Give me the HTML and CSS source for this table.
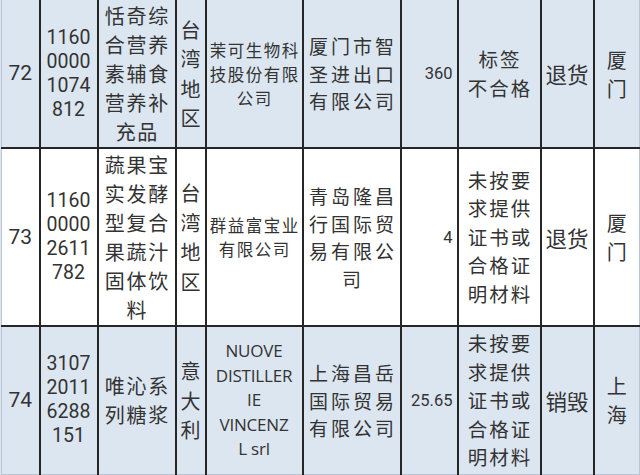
FILE: index.html
```html
<!DOCTYPE html>
<html>
<head>
<meta charset="utf-8">
<link rel="stylesheet" href="styles.css">
</head>
<body>
<div class="sheet">
<table class="grid">
<colgroup>
<col class="w1"><col class="w2"><col class="w3"><col class="w4"><col class="w5"><col class="w6"><col class="w7"><col class="w8"><col class="w9"><col class="w10">
</colgroup>
<tr class="r1 blue">
<td class="no">72</td>
<td class="code">1160<br>0000<br>1074<br>812</td>
<td class="name">恬奇综<br>合营养<br>素辅食<br>营养补<br>充品</td>
<td class="area">台<br>湾<br>地<br>区</td>
<td class="maker">茉可生物科<br>技股份有限<br>公司</td>
<td class="importer">厦门市智<br>圣进出口<br>有限公司</td>
<td class="qty">360</td>
<td class="reason">标签<br>不合格</td>
<td class="act">退货</td>
<td class="port">厦<br>门</td>
</tr>
<tr class="r2 white">
<td class="no">73</td>
<td class="code">1160<br>0000<br>2611<br>782</td>
<td class="name">蔬果宝<br>实发酵<br>型复合<br>果蔬汁<br>固体饮<br>料</td>
<td class="area">台<br>湾<br>地<br>区</td>
<td class="maker">群益富宝业<br>有限公司</td>
<td class="importer">青岛隆昌<br>行国际贸<br>易有限公<br>司</td>
<td class="qty">4</td>
<td class="reason">未按要<br>求提供<br>证书或<br>合格证<br>明材料</td>
<td class="act">退货</td>
<td class="port">厦<br>门</td>
</tr>
<tr class="r3 blue">
<td class="no">74</td>
<td class="code">3107<br>2011<br>6288<br>151</td>
<td class="name">唯沁系<br>列糖浆</td>
<td class="area">意<br>大<br>利</td>
<td class="maker latin">NUOVE<br>DISTILLER<br>IE<br>VINCENZ<br>L srl</td>
<td class="importer">上海昌岳<br>国际贸易<br>有限公司</td>
<td class="qty">25.65</td>
<td class="reason">未按要<br>求提供<br>证书或<br>合格证<br>明材料</td>
<td class="act">销毁</td>
<td class="port">上<br>海</td>
</tr>
</table>
</div>
</body>
</html>
```
FILE: styles.css
```css
html, body {
  margin: 0;
  padding: 0;
  background: #dce6f1;
}
.sheet {
  width: 640px;
  height: 475px;
  overflow: hidden;
  background: #dce6f1;
}
.grid {
  border-collapse: collapse;
  table-layout: fixed;
  width: 638px;
  margin-left: 1px;
  font-family: "Noto Sans CJK SC", "Noto Sans", sans-serif;
  color: #333;
}
.w1 { width: 38px; }
.w2 { width: 58px; }
.w3 { width: 78px; }
.w4 { width: 30px; }
.w5 { width: 97px; }
.w6 { width: 98px; }
.w7 { width: 57px; }
.w8 { width: 83px; }
.w9 { width: 53px; }
.w10 { width: 46px; }
.grid td {
  border: 2px solid #262626;
  padding: 0;
  text-align: center;
  vertical-align: middle;
  font-size: 20px;
  line-height: 29px;
  overflow: hidden;
  white-space: nowrap;
}
.grid tr td:first-child { border-left: 1px solid #b9c5d3; }
.grid tr td:last-child { border-right: 1px solid #b9c5d3; }
.r1 td { border-top: none; }
.r3 td { border-bottom: 1px solid #b9c5d3; }
.r1 { height: 148px; }
.r2 { height: 178px; }
.r3 { height: 148px; }
.blue td { background: #dce6f1; }
.white td { background: #ffffff; }
.grid td.no { font-family: Roboto, "Noto Sans", sans-serif; font-size: 21px; }
.grid td.code { font-family: Roboto, "Noto Sans", sans-serif; font-size: 19.5px; line-height: 24px; }
.grid td.name { letter-spacing: 1.7px; padding-left: 1.7px; }
.grid td.area { line-height: 29.5px; letter-spacing: 0; }
.grid td.maker { font-size: 16.5px; line-height: 24px; letter-spacing: 1.5px; padding-left: 1.5px; }
.grid td.maker.latin { font-family: "Open Sans", "Noto Sans", sans-serif; font-size: 17px; line-height: 24.5px; letter-spacing: -0.2px; padding-left: 0; }
.grid td.importer { font-size: 19px; line-height: 27.5px; letter-spacing: 3px; padding-left: 3px; }
.grid td.qty { font-family: Roboto, "Noto Sans", sans-serif; font-size: 16.5px; text-align: right; padding-right: 4px; }
.grid td.reason { font-size: 19.5px; line-height: 28.5px; letter-spacing: 2px; padding-left: 2px; }
.grid td.act { font-size: 21.5px; }
.grid td.port { font-size: 20px; line-height: 29px; }
```
